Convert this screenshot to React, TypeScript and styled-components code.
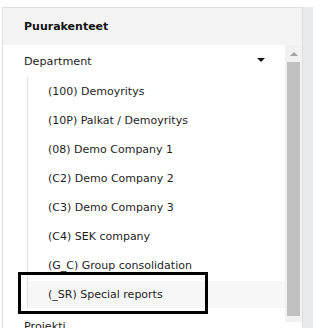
import React from 'react';
import styled, { createGlobalStyle } from 'styled-components';

const GlobalStyle = createGlobalStyle`
  html, body {
    margin: 0;
    padding: 0;
    background: #fff;
    overflow: hidden;
  }
  body {
    font-family: 'DejaVu Sans', Verdana, sans-serif;
    color: #1e1e1e;
  }
`;

const Page = styled.div`
  display: flex;
  padding: 7px 0 0 2px;
  height: 340px;
  box-sizing: border-box;
`;

const Panel = styled.section`
  width: 301px;
  border: 1px solid #dedede;
  border-bottom: none;
  box-sizing: border-box;
  display: flex;
  flex-direction: column;
  background: #fff;
`;

const SideStrip = styled.div`
  width: 10px;
  background: #e8ebec;
`;

const Header = styled.div`
  height: 37px;
  background: #f4f4f4;
  display: flex;
  align-items: center;
  padding-left: 21px;
  font-size: 11px;
  font-weight: bold;
  color: #111;
`;

const Body = styled.div`
  flex: 1;
  display: flex;
  position: relative;
`;

const Content = styled.div`
  flex: 1;
`;

const GroupRow = styled.div`
  height: 32px;
  display: flex;
  align-items: center;
  justify-content: space-between;
  padding: 0 20px 0 21px;
  font-size: 11.2px;
`;

const Caret = styled.span`
  width: 0;
  height: 0;
  border-left: 4px solid transparent;
  border-right: 4px solid transparent;
  border-top: 4px solid #111;
  margin-top: -2px;
`;

const Tree = styled.ul`
  list-style: none;
  margin: 0 0 0 24px;
  padding: 1px 0 0;
  border-left: 1px solid #e2e2e2;
`;

const Item = styled.li<{ $active?: boolean }>`
  height: 27px;
  margin-bottom: 2px;
  display: flex;
  align-items: center;
  padding-left: 20px;
  font-size: 11px;
  background: ${(p) => (p.$active ? '#f7f7f7' : 'transparent')};
`;

const NextGroup = styled(GroupRow)`
  height: 20px;
  align-items: flex-start;
  padding-top: 10px;
`;

const Scrollbar = styled.div`
  width: 17px;
  background: #f1f1f1;
  display: flex;
  flex-direction: column;
  align-items: center;
  height: 277px;
`;

const ArrowUp = styled.div`
  height: 17px;
  width: 100%;
  display: flex;
  align-items: center;
  justify-content: center;
  &::after {
    content: '';
    border-left: 4px solid transparent;
    border-right: 4px solid transparent;
    border-bottom: 4px solid #a3a3a3;
  }
`;

const Thumb = styled.div`
  width: 13px;
  flex: 1;
  background: #c1c1c1;
  margin-bottom: 6px;
`;

const Highlight = styled.div`
  position: absolute;
  left: 15px;
  top: 227px;
  width: 184px;
  height: 36px;
  border: 3px solid #000;
  pointer-events: none;
`;

const items = [
  '(100) Demoyritys',
  '(10P) Palkat / Demoyritys',
  '(08) Demo Company 1',
  '(C2) Demo Company 2',
  '(C3) Demo Company 3',
  '(C4) SEK company',
  '(G_C) Group consolidation',
  '(_SR) Special reports',
];

const App = () => {
  return (
    <>
      <GlobalStyle />
      <Page>
        <Panel>
          <Header>Puurakenteet</Header>
          <Body>
            <Content>
              <GroupRow>
                Department
                <Caret />
              </GroupRow>
              <Tree>
                {items.map((label, idx) => (
                  <Item key={idx} $active={idx === items.length - 1}>
                    {label}
                  </Item>
                ))}
              </Tree>
              <NextGroup>Projekti</NextGroup>
            </Content>
            <Scrollbar>
              <ArrowUp />
              <Thumb />
            </Scrollbar>
            <Highlight />
          </Body>
        </Panel>
        <SideStrip />
      </Page>
    </>
  );
};

export default App;
